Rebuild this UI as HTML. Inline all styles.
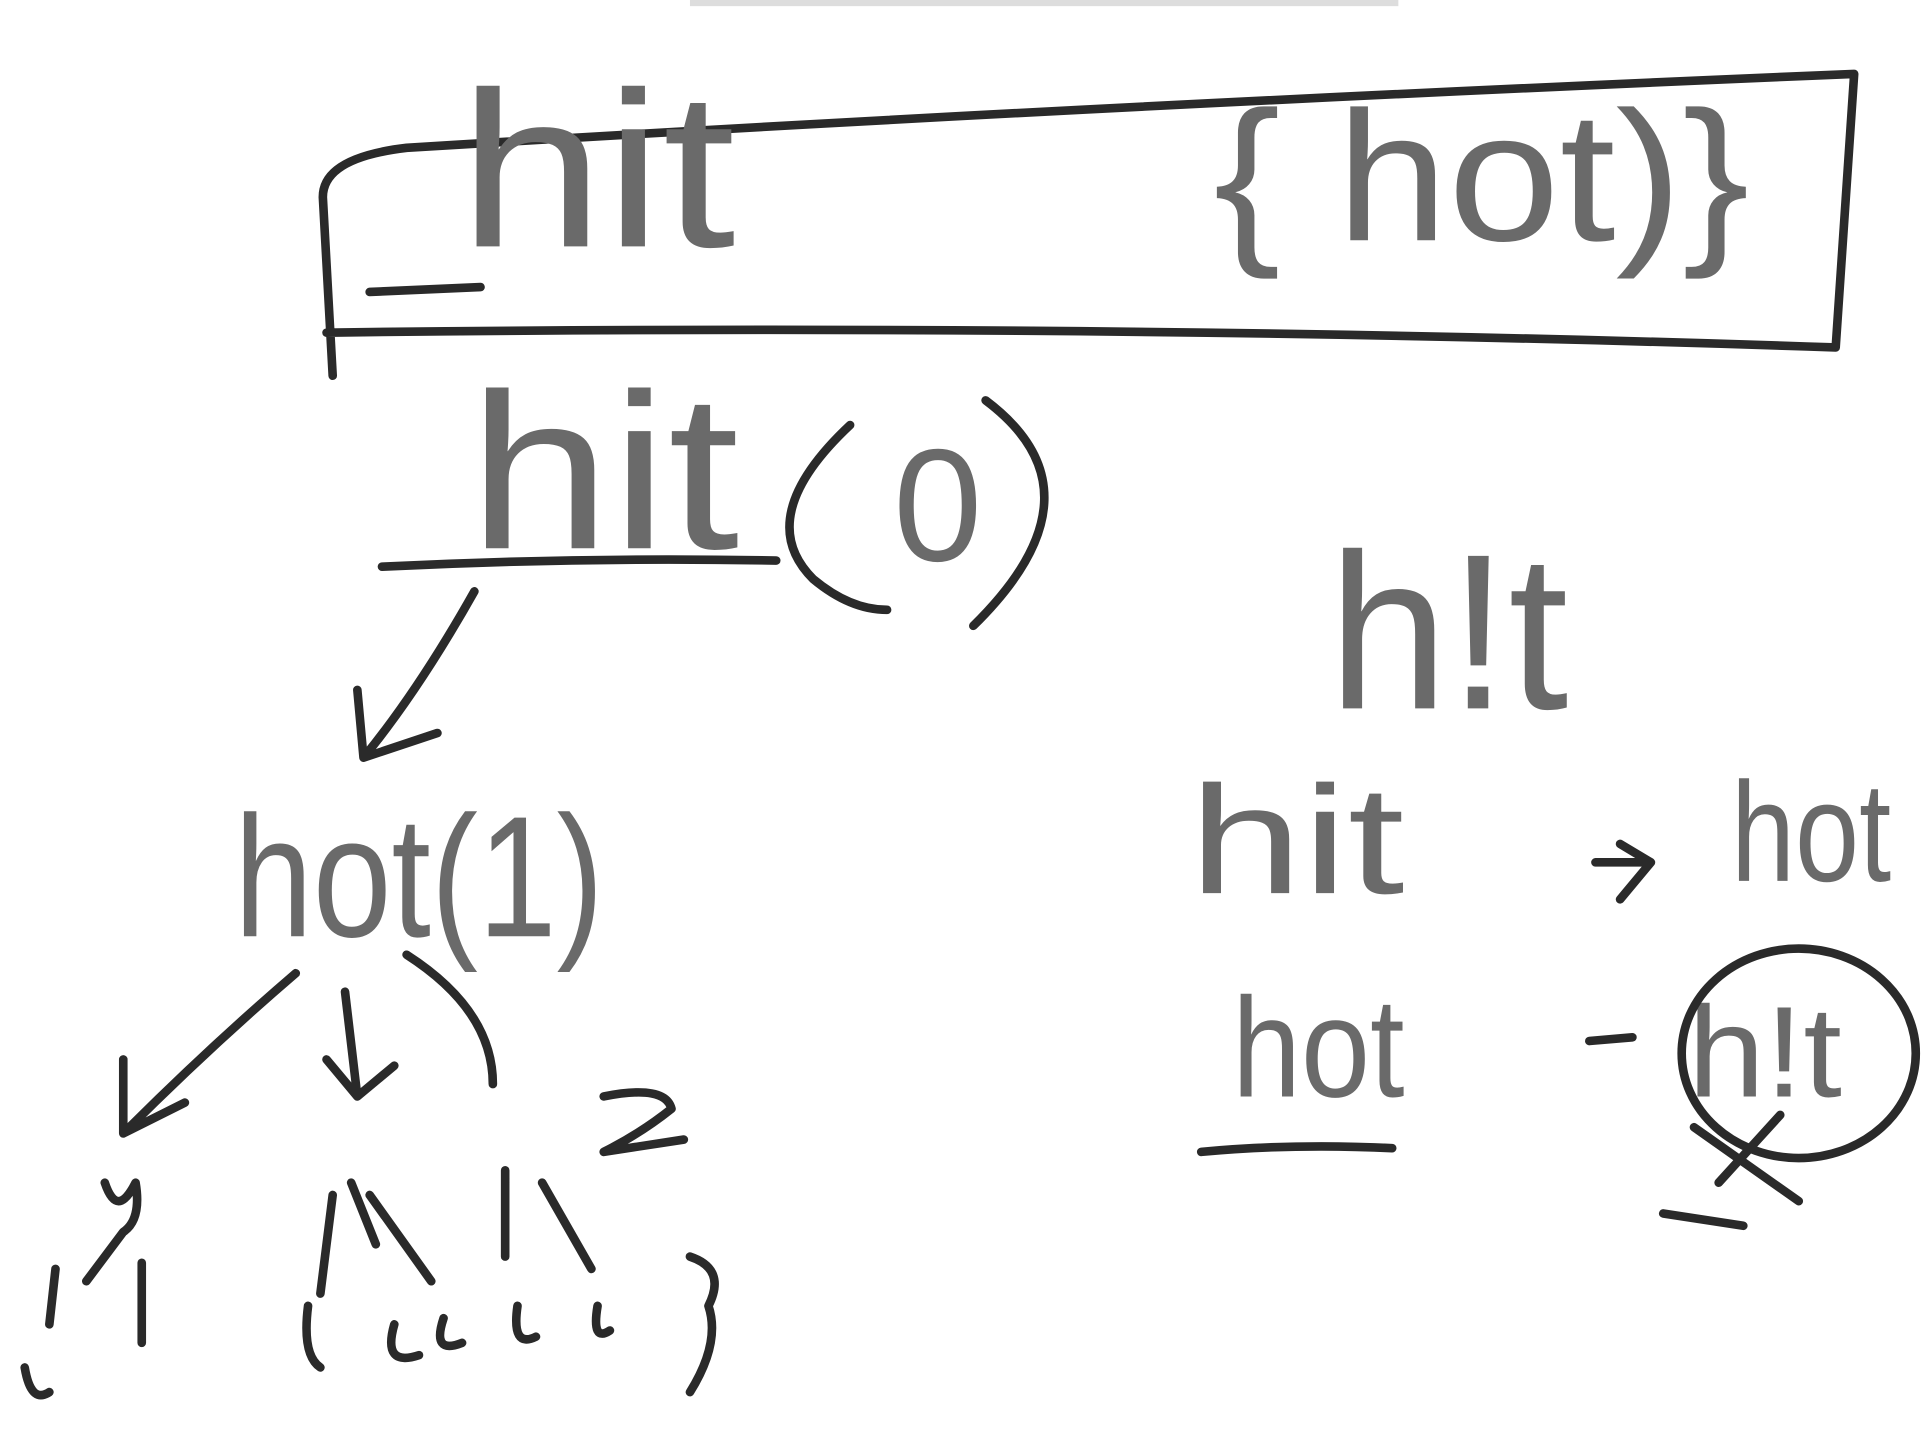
<!DOCTYPE html>
<html><head><meta charset="utf-8"><style>
html,body{margin:0;padding:0;background:#fff;}
svg{display:block}
text{font-family:"Liberation Sans",sans-serif;fill:#6a6a6a;}
path{fill:none;stroke:#2a2a2a;stroke-width:7;stroke-linecap:round;stroke-linejoin:round;}
</style></head><body>
<svg width="1922" height="1434" viewBox="0 0 1560 1164" xmlns="http://www.w3.org/2000/svg">
<rect x="560" y="0" width="575" height="5" fill="#ddd"/>
<!-- box -->
<path d="M270 305 L262 160 Q262 128 330 120 Q900 85 1505 60 L1490 282 Q900 262 265 270"/>
<path d="M300 237 L390 233"/>
<text x="372" y="200" font-size="180" textLength="225" lengthAdjust="spacingAndGlyphs">hit</text>
<text x="985" y="195" font-size="150" textLength="435" lengthAdjust="spacingAndGlyphs">{ hot)}</text>
<!-- hit(0) -->
<text x="380" y="445" font-size="180" textLength="220" lengthAdjust="spacingAndGlyphs">hit</text>
<path d="M310 460 Q470 452 630 455"/>
<path d="M690 345 Q610 420 660 470 Q690 495 720 495"/>
<path d="M800 325 Q900 400 790 508"/>
<text x="725" y="455" font-size="130">0</text>
<path d="M385 480 Q340 560 295 615 M290 560 L295 615 L355 595"/>
<!-- hot(1) -->
<text x="190" y="760" font-size="140" textLength="300" lengthAdjust="spacingAndGlyphs">hot(1)</text>
<path d="M240 790 Q170 850 100 920 M100 860 L100 920 L150 895"/>
<path d="M280 805 L290 890 M265 860 L290 890 L320 865"/>
<path d="M330 775 Q400 820 400 880"/>
<path d="M490 890 Q540 880 545 900 Q520 920 490 935 L555 925"/>
<path d="M85 960 Q95 990 110 960 Q115 990 100 1000 M115 1025 L115 1090 M45 1030 L40 1075 M70 1040 L100 1000 M20 1110 Q25 1140 40 1130"/>
<path d="M270 970 L260 1050 M300 970 L350 1040 M410 950 L410 1020 M440 960 L480 1030 M285 960 L305 1010 M560 1020 Q590 1030 575 1060 Q585 1090 560 1130"/>
<path d="M250 1060 Q245 1100 260 1110 M320 1075 Q310 1110 340 1100 M360 1070 Q350 1100 375 1090 M420 1060 Q415 1095 435 1085 M485 1060 Q480 1090 495 1080"/>
<!-- right side -->
<text x="1078" y="575" font-size="180" textLength="195" lengthAdjust="spacingAndGlyphs">h!t</text>
<text x="965" y="725" font-size="125" textLength="175" lengthAdjust="spacingAndGlyphs">hit</text>
<path d="M1295 700 L1340 700 M1315 685 L1340 700 L1315 730"/>
<text x="1405" y="715" font-size="115" textLength="130" lengthAdjust="spacingAndGlyphs">hot</text>
<text x="1000" y="890" font-size="115" textLength="140" lengthAdjust="spacingAndGlyphs">hot</text>
<path d="M975 935 Q1050 928 1130 932"/>
<path d="M1290 845 L1325 842"/>
<text x="1370" y="890" font-size="105" textLength="125" lengthAdjust="spacingAndGlyphs">h!t</text>
<ellipse cx="1460" cy="855" rx="95" ry="85" fill="none" stroke="#2a2a2a" stroke-width="7"/>
<path d="M1375 915 L1460 975 M1445 905 L1395 960 M1350 985 L1415 995"/>
</svg>
</body></html>
